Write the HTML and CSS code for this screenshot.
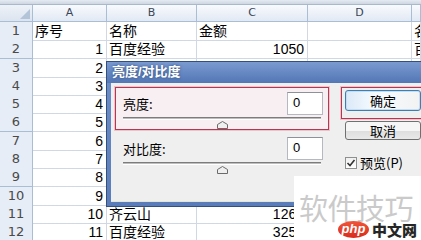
FILE: index.html
```html
<!DOCTYPE html>
<html lang="zh-CN">
<head>
  <meta charset="UTF-8" />
  <title>亮度/对比度</title>
  <link rel="stylesheet" href="styles.css">
</head>
<body>
  <div class="sheet">
    <div class="topbar"></div>
    <div class="sheet-row head">
      <div class="hdr corner"><span class="corner-tri"></span></div>
      <div class="hdr">A</div>
      <div class="hdr">B</div>
      <div class="hdr">C</div>
      <div class="hdr">D</div>
      <div class="hdr"></div>
    </div>
    <div class="sheet-row">
      <div class="hdr rownum">1</div>
      <div class="cell">序号</div>
      <div class="cell">名称</div>
      <div class="cell">金额</div>
      <div class="cell"></div>
      <div class="cell">名</div>
    </div>
    <div class="sheet-row">
      <div class="hdr rownum">2</div>
      <div class="cell num">1</div>
      <div class="cell">百度经验</div>
      <div class="cell num">1050</div>
      <div class="cell"></div>
      <div class="cell">百</div>
    </div>
    <div class="sheet-row">
      <div class="hdr rownum">3</div>
      <div class="cell num">2</div>
      <div class="cell"></div><div class="cell"></div><div class="cell"></div><div class="cell"></div>
    </div>
    <div class="sheet-row">
      <div class="hdr rownum">4</div>
      <div class="cell num">3</div>
      <div class="cell"></div><div class="cell"></div><div class="cell"></div><div class="cell"></div>
    </div>
    <div class="sheet-row">
      <div class="hdr rownum">5</div>
      <div class="cell num">4</div>
      <div class="cell"></div><div class="cell"></div><div class="cell"></div><div class="cell"></div>
    </div>
    <div class="sheet-row">
      <div class="hdr rownum">6</div>
      <div class="cell num">5</div>
      <div class="cell"></div><div class="cell"></div><div class="cell"></div><div class="cell"></div>
    </div>
    <div class="sheet-row">
      <div class="hdr rownum">7</div>
      <div class="cell num">6</div>
      <div class="cell"></div><div class="cell"></div><div class="cell"></div><div class="cell"></div>
    </div>
    <div class="sheet-row">
      <div class="hdr rownum">8</div>
      <div class="cell num">7</div>
      <div class="cell"></div><div class="cell"></div><div class="cell"></div><div class="cell"></div>
    </div>
    <div class="sheet-row">
      <div class="hdr rownum">9</div>
      <div class="cell num">8</div>
      <div class="cell"></div><div class="cell"></div><div class="cell"></div><div class="cell"></div>
    </div>
    <div class="sheet-row">
      <div class="hdr rownum">10</div>
      <div class="cell num">9</div>
      <div class="cell"></div><div class="cell"></div><div class="cell"></div><div class="cell"></div>
    </div>
    <div class="sheet-row">
      <div class="hdr rownum">11</div>
      <div class="cell num">10</div>
      <div class="cell">齐云山</div>
      <div class="cell num">1260</div>
      <div class="cell"></div><div class="cell"></div>
    </div>
    <div class="sheet-row">
      <div class="hdr rownum">12</div>
      <div class="cell num">11</div>
      <div class="cell">百度经验</div>
      <div class="cell num">3250</div>
      <div class="cell"></div><div class="cell"></div>
    </div>
  </div>

  <div class="dialog">
    <div class="dialog-title">亮度/对比度</div>
    <div class="dialog-body">
      <div class="controls">
        <div class="group marked">
          <div class="field">
            <span>亮度:</span>
            <span class="input">0</span>
          </div>
          <div class="slider">
            <div class="track"></div>
            <svg class="thumb" width="11" height="8" viewBox="0 0 11 8">
              <path d="M0.5 7.5 V3.5 L5.5 0.5 L10.5 3.5 V7.5 Z" fill="#efefef" stroke="#6b6b6b"/>
            </svg>
          </div>
        </div>
        <div class="group">
          <div class="field">
            <span>对比度:</span>
            <span class="input">0</span>
          </div>
          <div class="slider">
            <div class="track"></div>
            <svg class="thumb" width="11" height="8" viewBox="0 0 11 8">
              <path d="M0.5 7.5 V3.5 L5.5 0.5 L10.5 3.5 V7.5 Z" fill="#efefef" stroke="#6b6b6b"/>
            </svg>
          </div>
        </div>
      </div>
      <div class="actions">
        <div class="btn-wrap marked">
          <button class="btn default">确定</button>
        </div>
        <button class="btn cancel">取消</button>
        <label class="check">
          <span class="box">
            <svg width="10" height="10" viewBox="0 0 10 10">
              <path d="M1.5 5 L4 7.5 L8.5 2" fill="none" stroke="#333" stroke-width="1.6"/>
            </svg>
          </span>
          预览(P)
        </label>
      </div>
    </div>
  </div>

  <div class="watermark">
    <div class="wm-text">软件技巧</div>
    <div class="wm-logo">
      <span class="php">php</span>
      <span class="cn">中文网</span>
    </div>
  </div>
</body>
</html>
```

FILE: styles.css
```css
* {
  box-sizing: border-box;
}

body {
  margin: 0;
  width: 421px;
  height: 240px;
  overflow: hidden;
  position: relative;
  background: #fff;
  font-family: "Liberation Sans", "Noto Sans CJK SC", sans-serif;
  font-size: 14px;
  color: #000;
}

/* spreadsheet */
.topbar {
  height: 5px;
  background: linear-gradient(#e6ebf2, #cdd6e2);
  border-bottom: 1px solid #a9b9cc;
}

.sheet-row {
  display: grid;
  grid-template-columns: 33px 74px 90px 111px 104px 1fr;
  height: 18.3px;
}

.sheet-row.head {
  height: 17px;
}

.cell {
  border-right: 1px solid #d0d7e5;
  border-bottom: 1px solid #d0d7e5;
  padding: 0 2px;
  line-height: 18px;
  white-space: nowrap;
  overflow: hidden;
}

.num {
  text-align: right;
  padding-right: 3px;
}

.hdr {
  background: linear-gradient(#f8fafd, #e2e9f4);
  border-right: 1px solid #a9bdd4;
  border-bottom: 1px solid #a9bdd4;
  text-align: center;
  font: 11px "DejaVu Sans", sans-serif;
  line-height: 16px;
  color: #3a4658;
}

.rownum {
  background: #e6edf7;
  font-size: 13px;
  line-height: 18px;
  color: #4a4a4a;
}

.corner {
  position: relative;
  background: linear-gradient(#eef2f8, #dce4ef);
}

.corner-tri {
  position: absolute;
  right: 2px;
  bottom: 2px;
  border-left: 10px solid transparent;
  border-bottom: 10px solid #b4c4d8;
}

/* dialog */
.dialog {
  position: absolute;
  left: 106px;
  top: 61px;
  width: 330px;
  height: 146px;
  border: 1px solid #33507c;
  background: linear-gradient(#6d8fc8, #5a7db9);
  display: flex;
  flex-direction: column;
}

.dialog-title {
  height: 21px;
  padding: 0 5px;
  color: #fff;
  font-weight: bold;
  font-size: 13px;
  line-height: 20px;
  background: linear-gradient(#7a9ad0, #5377b5);
  text-shadow: 0 0 3px #2b4878;
}

.dialog-body {
  flex: 1;
  margin: 0 4px 4px;
  background: #efefef;
  border-bottom: 1px solid #dfe8d6;
  padding: 4px 0 0 4px;
  display: flex;
  font-size: 13px;
  font-family: "Noto Sans CJK SC", sans-serif;
}

.controls {
  width: 216px;
}

.marked {
  border: 1px solid #bc3450;
  box-shadow: 0 0 0 1px rgba(214, 120, 140, 0.35);
}

.group {
  height: 43px;
  padding: 4px 5px 0 7px;
  border: 1px solid transparent;
}

.group.marked {
  background: #f8eff2;
  border-color: #bc3450;
}

.group + .group {
  margin-top: 1px;
  padding-top: 5px;
}

.field {
  display: flex;
  justify-content: space-between;
  align-items: center;
  height: 23px;
}

.input {
  width: 36px;
  height: 23px;
  background: #fff;
  border: 1px solid #b5b8bf;
  border-top-color: #8e9198;
  padding-left: 5px;
  font-family: "Liberation Sans", sans-serif;
  font-size: 13px;
  line-height: 20px;
}

.slider {
  margin-top: 2px;
  display: flex;
  flex-direction: column;
  align-items: center;
  padding-right: 2px;
}

.track {
  width: 100%;
  height: 3px;
  border-top: 1px solid #7c7c7c;
  background: #bdbdbd;
  border-bottom: 1px solid #fff;
}

.thumb {
  display: block;
  margin-top: 1px;
}

.actions {
  margin-left: 12px;
  display: flex;
  flex-direction: column;
  align-items: flex-start;
}

.btn-wrap {
  padding: 2px 0 7px 3px;
  width: 90px;
}

.btn {
  display: block;
  width: 76px;
  height: 21px;
  padding: 0;
  border: 1px solid #707070;
  border-radius: 3px;
  background: linear-gradient(#f6f6f6 50%, #dedede 51%, #e9e9e9);
  font-family: "Noto Sans CJK SC", sans-serif;
  font-size: 13px;
  line-height: 18px;
  color: #000;
}

.btn.default {
  border-color: #3c7fb1;
  background: linear-gradient(90deg, #dbe9f8, #f7fbff 40%, #f2f2f2);
  box-shadow: inset 0 0 0 1px #c4ddf4;
}

.btn.cancel {
  margin: 2px 0 0 4px;
  height: 19px;
  line-height: 16px;
}

.check {
  display: flex;
  align-items: center;
  gap: 3px;
  margin: 13px 0 0 4px;
  font-size: 13px;
}

.box {
  width: 12px;
  height: 12px;
  border: 1px solid #8e8f8f;
  background: linear-gradient(#f0f0f0, #fff);
  display: flex;
  align-items: center;
  justify-content: center;
}

/* watermark */
.watermark {
  position: absolute;
  left: 294px;
  top: 176px;
  right: 0;
  bottom: 0;
  background: #fff;
  padding: 16px 0 0 5px;
  font-family: "Noto Sans CJK SC", sans-serif;
}

.wm-text {
  font-size: 29px;
  line-height: 30px;
  color: #cacaca;
  letter-spacing: -0.5px;
}

.wm-logo {
  display: flex;
  align-items: center;
  gap: 3px;
  margin: -1px 0 0 39px;
}

.php {
  width: 31px;
  height: 17px;
  border-radius: 50%;
  background: linear-gradient(#f0553a, #d92a1c);
  color: #fff;
  font-family: "Liberation Sans", sans-serif;
  font-size: 13px;
  font-style: italic;
  font-weight: bold;
  line-height: 16px;
  text-align: center;
}

.cn {
  font-size: 15px;
  font-weight: 900;
  color: #262626;
  line-height: 17px;
}
```
